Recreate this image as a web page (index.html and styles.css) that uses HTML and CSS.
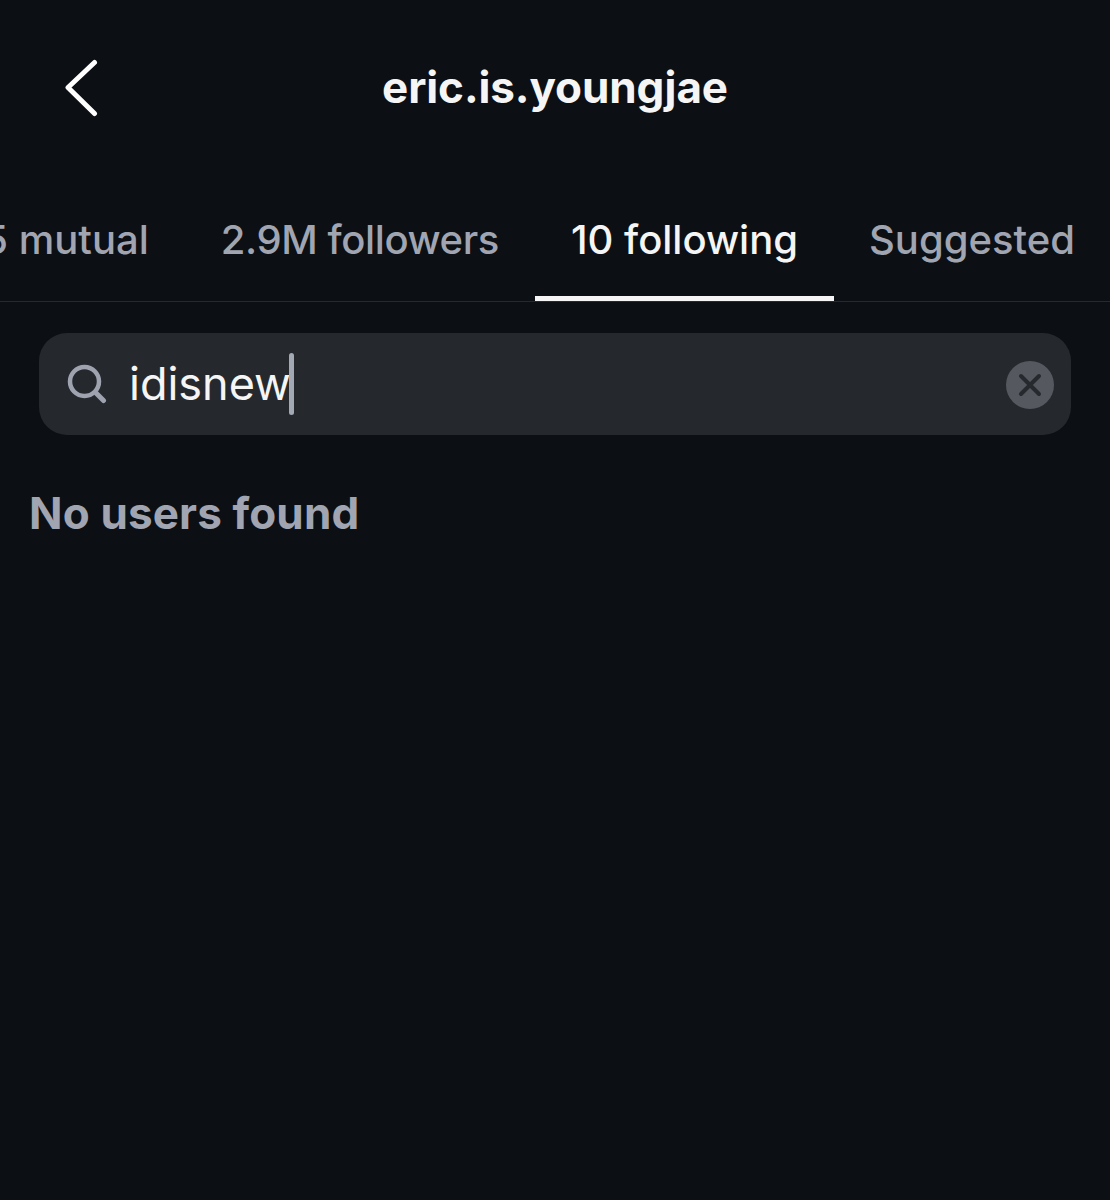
FILE: index.html
```html
<!DOCTYPE html>
<html lang="en">
<head>
<meta charset="utf-8">
<title>eric.is.youngjae</title>
<link rel="stylesheet" href="styles.css">
</head>
<body>
<main class="screen">
  <header class="topbar">
    <svg class="back" width="36" height="60" viewBox="0 0 36 60" fill="none"><path d="M30.500 3.500 L4 28.500 L30.500 54.500" stroke="#fff" stroke-width="5" stroke-linecap="round" stroke-linejoin="round"/></svg>
    <h1 class="title">eric.is.youngjae</h1>
  </header>
  <nav class="tabs">
    <div class="tab">25 mutual</div>
    <div class="tab tight">2.9M followers</div>
    <div class="tab active">10 following</div>
    <div class="tab">Suggested</div>
  </nav>
  <div class="search">
    <svg class="search-icon" width="40" height="40" viewBox="0 0 40 40" fill="none"><circle cx="17.500" cy="17.500" r="14.500" stroke="#9ea3af" stroke-width="4.500"/><path d="M28.500 28.500 L36.500 36.500" stroke="#9ea3af" stroke-width="5" stroke-linecap="round"/></svg>
    <div class="query"><span>idisnew</span><i class="caret"></i></div>
    <div class="clear">
      <svg width="24" height="24" viewBox="0 0 24 24" fill="none"><path d="M3 3 L21 21 M21 3 L3 21" stroke="#26292e" stroke-width="4" stroke-linecap="round"/></svg>
    </div>
  </div>
  <p class="empty">No users found</p>
</main>
</body>
</html>
```
FILE: styles.css
```css
* { box-sizing: border-box; }
html, body { margin: 0; height: 100%; }
body { background: #0c1014; font-family: "Inter", "Liberation Sans", sans-serif; overflow: hidden; }
.screen { width: 1110px; height: 1200px; background: #0c1014; overflow: hidden; }
.topbar { position: relative; height: 176px; display: flex; justify-content: center; padding-top: 58px; }
.back { position: absolute; left: 64px; top: 59px; }
.title { margin: 0; color: #f5f5f5; font-size: 44px; line-height: 58px; font-weight: 700; letter-spacing: -0.1px; }
.tabs { display: flex; justify-content: flex-end; height: 126px; border-bottom: 1px solid #262a2f; }
.tab { flex: none; padding: 36px 36px 0; height: 125px; color: #a0a5b1; font-size: 40px; line-height: 56px; font-weight: 500; white-space: nowrap; }
.tab:last-child { padding-left: 35px; padding-right: 35px; }
.tab.tight { letter-spacing: -0.4px; }
.tab.active { color: #f5f5f5; border-bottom: 5px solid #f5f5f5; }
.search { margin: 31px 39px 0; height: 102px; border-radius: 28px; background: #25292e; display: flex; align-items: center; padding: 0 17px 0 28px; }
.search-icon { flex: none; }
.query { flex: 1; display: flex; align-items: center; margin-left: 22px; color: #f5f5f5; font-size: 45px; line-height: 62px; font-weight: 400; }
.caret { display: block; width: 5px; height: 62px; margin-left: -2px; border-radius: 3px; background: #a3a8b5; }
.clear { flex: none; width: 48px; height: 48px; margin-top: 2px; border-radius: 50%; background: #55595f; display: flex; align-items: center; justify-content: center; }
.empty { margin: 49px 0 0 29px; color: #a0a5b1; font-size: 44px; line-height: 58px; font-weight: 700; letter-spacing: 0.15px; }
```
